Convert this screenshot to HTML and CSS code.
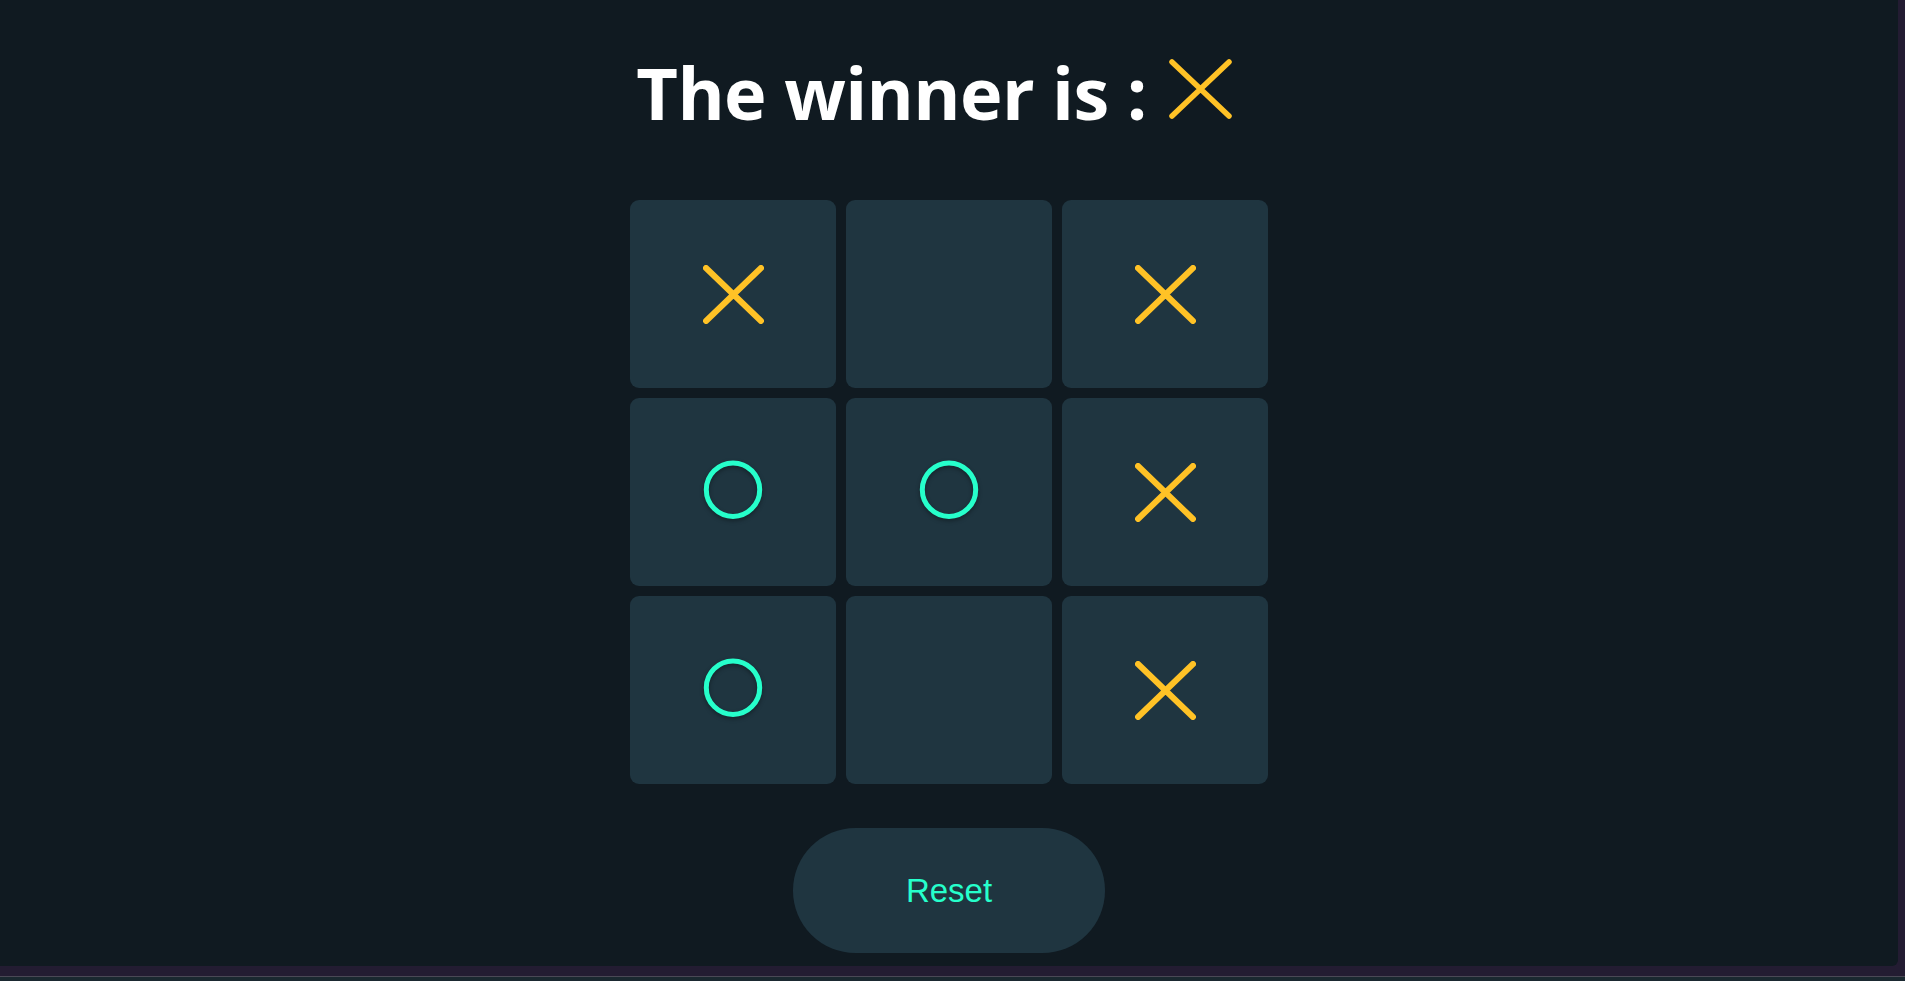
FILE: index.html
```html
<!DOCTYPE html>
<html lang="en">
<head>
<meta charset="utf-8">
<title>Tic Tac Toe</title>
<link rel="stylesheet" href="styles.css">
</head>
<body>
<div class="app">
  <h1 class="title"><span class="title-text">The winner is :</span>
    <svg class="title-icon" width="63" height="60" viewBox="0 0 63 60"><path d="M3 3 L60 57 M60 3 L3 57" /></svg>
  </h1>
  <div class="board">
    <div class="box"><svg class="cross" width="61" height="59" viewBox="0 0 61 59"><path d="M3 3 L58 56 M58 3 L3 56"/></svg></div>
    <div class="box"></div>
    <div class="box"><svg class="cross" width="61" height="59" viewBox="0 0 61 59"><path d="M3 3 L58 56 M58 3 L3 56"/></svg></div>
    <div class="box"><svg class="circle" width="60" height="64" viewBox="0 0 60 64"><circle cx="30" cy="29.7" r="26.7"/></svg></div>
    <div class="box"><svg class="circle" width="60" height="64" viewBox="0 0 60 64"><circle cx="30" cy="29.7" r="26.7"/></svg></div>
    <div class="box"><svg class="cross" width="61" height="59" viewBox="0 0 61 59"><path d="M3 3 L58 56 M58 3 L3 56"/></svg></div>
    <div class="box"><svg class="circle" width="60" height="64" viewBox="0 0 60 64"><circle cx="30" cy="29.7" r="26.7"/></svg></div>
    <div class="box"></div>
    <div class="box"><svg class="cross" width="61" height="59" viewBox="0 0 61 59"><path d="M3 3 L58 56 M58 3 L3 56"/></svg></div>
  </div>
  <button class="reset">Reset</button>
</div>
<div class="frame-gap"></div>
<div class="frame-line"></div>
<div class="frame-foot"></div>
</body>
</html>
```
FILE: styles.css
```css
html, body {
  margin: 0;
  padding: 0;
}
body {
  background: #231c32;
  width: 1905px;
  height: 981px;
  overflow: hidden;
}
.app {
  width: 1898px;
  height: 966px;
  background: #101a21;
  border-bottom-right-radius: 6px;
  display: flex;
  flex-direction: column;
  align-items: center;
  box-sizing: border-box;
}
.title {
  margin: 0;
  padding-top: 57px;
  height: 70px;
  display: flex;
  align-items: center;
  color: #ffffff;
  font-family: "Open Sans", "Noto Sans", sans-serif;
  font-weight: 700;
  font-size: 72px;
  letter-spacing: -0.6px;
  line-height: 1;
}
.title-text {
  white-space: nowrap;
}
.title-icon {
  margin-left: 22px;
  margin-right: 30px;
  margin-top: -7px;
  display: block;
}
.title-icon path {
  fill: none;
  stroke: #ffc226;
  stroke-width: 5.5;
  stroke-linecap: round;
}
.board {
  margin-top: 73px;
  display: grid;
  grid-template-columns: repeat(3, 206px);
  grid-template-rows: repeat(3, 188px);
  gap: 10px;
}
.box {
  background: #1f3540;
  border-radius: 9px;
  display: flex;
  align-items: center;
  justify-content: center;
}
.cross path {
  fill: none;
  stroke: #ffc226;
  stroke-width: 6;
  stroke-linecap: round;
}
.circle {
  filter: drop-shadow(0 2px 2px rgba(0, 0, 0, 0.35));
}
.circle circle {
  fill: none;
  stroke: #26ffcb;
  stroke-width: 5;
}
.reset {
  margin-top: 44px;
  width: 312px;
  height: 125px;
  border: none;
  border-radius: 63px;
  background: #1f3540;
  color: #26ffcb;
  font-family: "Liberation Sans", Arial, sans-serif;
  font-size: 33px;
  padding: 0;
  cursor: pointer;
}
.frame-gap {
  height: 10px;
}
.frame-line {
  height: 1px;
  background: #4a4856;
}
.frame-foot {
  height: 4px;
  background: #1a2830;
}
```
